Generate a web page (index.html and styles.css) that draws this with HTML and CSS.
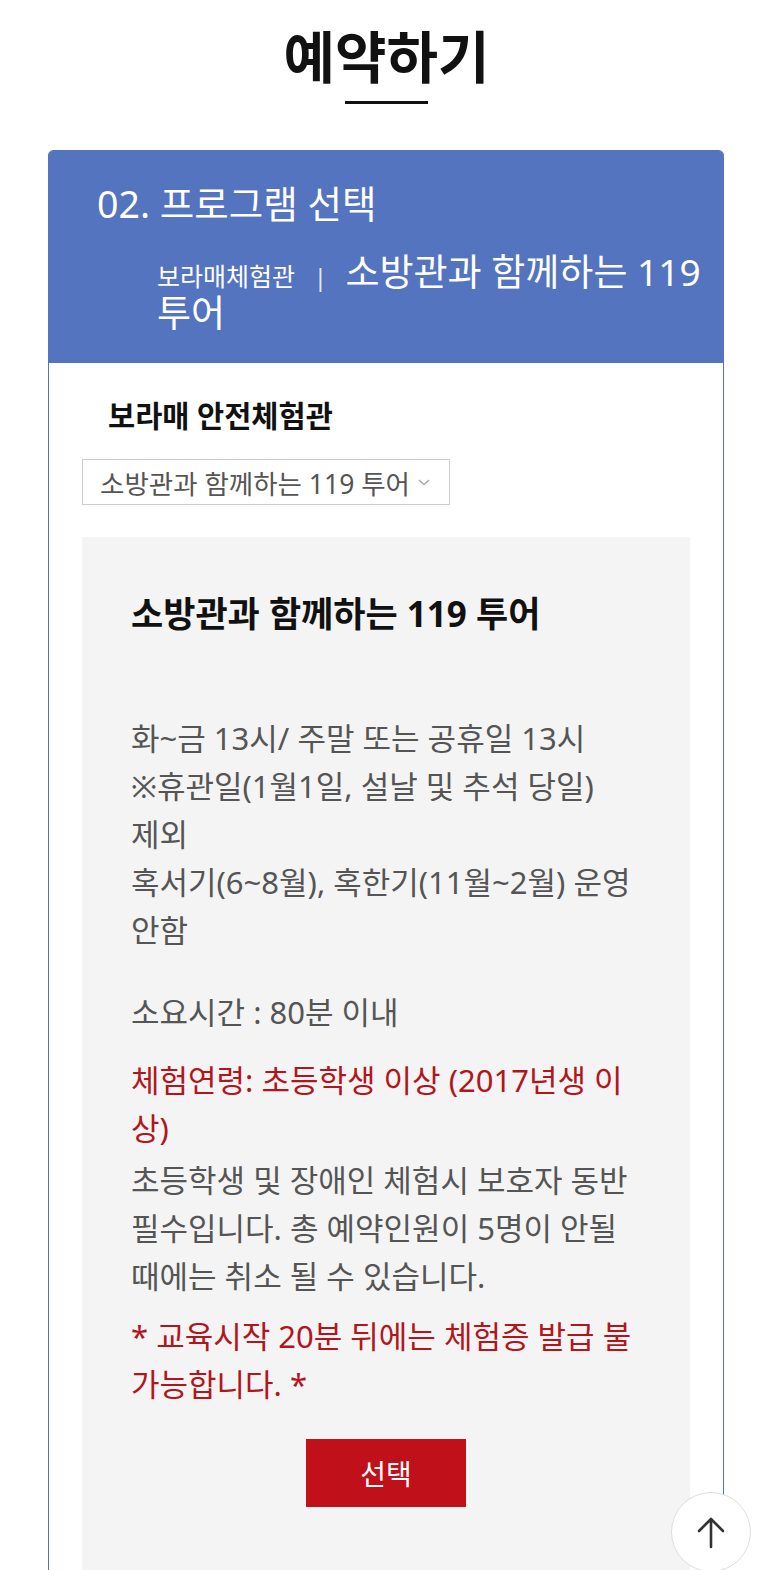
FILE: index.html
```html
<!DOCTYPE html>
<html lang="ko">
<head>
    <meta charset="UTF-8">
    <meta name="viewport" content="width=device-width, initial-scale=1.0">
    <title>예약하기</title>
    <link rel="stylesheet" href="styles.css">
</head>
<body>
    <h1 class="page-title">예약하기</h1>

    <div class="panel">
        <div class="panel-head">
            <h2 class="step">02. 프로그램 선택</h2>
            <p class="crumb">
                <span class="crumb-place">보라매체험관</span>
                <span class="crumb-bar">|</span>
                <span class="crumb-name">소방관과 함께하는 119 투어</span>
            </p>
        </div>

        <div class="panel-body">
            <h3 class="center-name">보라매 안전체험관</h3>
            <div class="select-box">
                <span class="select-text">소방관과 함께하는 119 투어</span>
                <svg class="select-arrow" width="14" height="10" viewBox="0 0 14 10">
                    <path d="M2 3 L7 7.5 L12 3" fill="none" stroke="#aaa" stroke-width="1.4"/>
                </svg>
            </div>

            <div class="program">
                <h4 class="program-title">소방관과 함께하는 119 투어</h4>

                <p class="info keep">화~금 13시/ 주말 또는 공휴일 13시<br>
                    ※휴관일(1월1일, 설날 및 추석 당일) 제외<br>
                    혹서기(6~8월), 혹한기(11월~2월) 운영 안함</p>

                <p class="info time">소요시간 : 80분 이내</p>

                <p class="info age red">체험연령: 초등학생 이상 (2017년생 이상)</p>
                <p class="info keep guard">초등학생 및 장애인 체험시 보호자 동반 필수입니다. 총 예약인원이 5명이 안될 때에는 취소 될 수 있습니다.</p>
                <p class="info notice red">* 교육시작 20분 뒤에는 체험증 발급 불가능합니다. *</p>

                <div class="btn-wrap">
                    <button class="select-btn">선택</button>
                </div>
            </div>
        </div>
    </div>

    <button class="top-btn" aria-label="맨 위로">
        <svg width="30" height="34" viewBox="0 0 30 34">
            <path d="M15 32 V4 M3 16 L15 4 L27 16" fill="none" stroke="#333" stroke-width="2.6" stroke-linecap="round" stroke-linejoin="round"/>
        </svg>
    </button>
</body>
</html>
```

FILE: styles.css
```css
* {
    margin: 0;
    padding: 0;
    box-sizing: border-box;
}

body {
    background: #fff;
    color: #333;
    font-family: "Noto Sans", "Noto Sans CJK KR", sans-serif;
    overflow: hidden;
}

.page-title {
    text-align: center;
    font-size: 56px;
    font-weight: 700;
    line-height: 1;
    color: #111;
    padding-top: 28px;
}

.page-title::after {
    content: "";
    display: block;
    width: 83px;
    height: 3px;
    background: #111;
    margin: 17px auto 0;
}

.panel {
    margin: 46px 49px 0 48px;
    border: 1px solid #5474bf;
    border-radius: 5px 5px 0 0;
    overflow: hidden;
}

.panel-head {
    background: #5474bf;
    color: #fff;
    padding: 28px 6px 36px 48px;
    height: 212px;
}

.step {
    font-size: 37.5px;
    font-weight: 400;
    line-height: 49px;
}

.crumb {
    margin-top: 26px;
    padding-left: 60px;
    font-size: 37px;
    line-height: 36px;
}

.crumb-place {
    font-size: 25px;
}

.crumb-bar {
    font-size: 24px;
    margin: 0 9px 0 9px;
    opacity: 0.85;
}

.panel-body {
    padding: 32px 33px 0;
    background: #fff;
}

.center-name {
    font-size: 29.5px;
    font-weight: 700;
    color: #111;
    padding-left: 26px;
    line-height: 41px;
}

.select-box {
    display: flex;
    align-items: center;
    width: 368px;
    height: 46px;
    margin-top: 23px;
    border: 1px solid #ccc;
    padding: 0 18px 0 17px;
    gap: 8px;
}

.select-text {
    flex: 1;
    font-size: 26.5px;
    color: #555;
    white-space: nowrap;
    overflow: hidden;
}

.program {
    margin-top: 32px;
    background: #f4f4f4;
    padding: 55px 49px 90px 49px;
}

.program-title {
    font-size: 35px;
    font-weight: 700;
    color: #111;
    line-height: 44px;
    margin-bottom: 78px;
}

.info {
    font-size: 31px;
    line-height: 48px;
    color: #555;
}

.keep {
    word-break: keep-all;
}

.time {
    margin-top: 34px;
}

.age {
    margin-top: 20px;
}

.guard {
    margin-top: 4px;
}

.notice {
    margin-top: 12px;
}

.info.red {
    color: #b3151c;
}

.btn-wrap {
    display: flex;
    justify-content: center;
    margin-top: 31px;
}

.select-btn {
    width: 160px;
    height: 68px;
    border: none;
    background: #c0111a;
    color: #fff;
    font-family: inherit;
    font-size: 28px;
}

.top-btn {
    position: fixed;
    right: 22px;
    bottom: -2px;
    width: 80px;
    height: 80px;
    border-radius: 50%;
    background: #fff;
    border: 1px solid #ddd;
    display: flex;
    align-items: center;
    justify-content: center;
}
```
